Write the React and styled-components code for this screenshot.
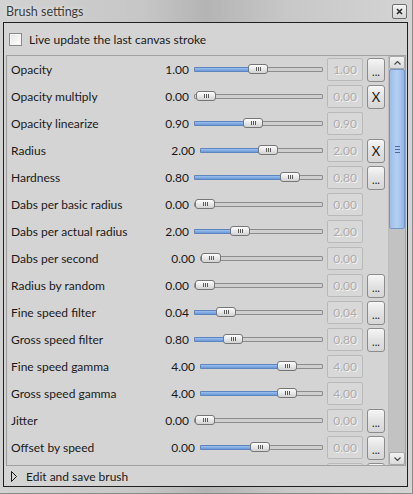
import React from 'react';
import styled, { createGlobalStyle } from 'styled-components';

const GlobalStyle = createGlobalStyle`
  html, body {
    margin: 0;
    padding: 0;
    background: #cfcfcf;
  }
  body {
    font-family: Lato, "Noto Sans", "DejaVu Sans", sans-serif;
    font-size: 12px;
    color: #1a1a1a;
  }
`;

const Frame = styled.div`
  width: 413px;
  height: 494px;
  box-sizing: border-box;
  display: flex;
  flex-direction: column;
  background: linear-gradient(90deg, #d2d2d2 0%, #c6c6c6 35%, #b4b4b4 50%, #c8c8c8 70%, #d4d4d4 100%);
  border-right: 1px solid #8a8a8a;
  border-bottom: 1px solid #8a8a8a;
  padding: 0 4px 6px 3px;
`;

const TitleBar = styled.div`
  height: 22px;
  display: flex;
  align-items: center;
  justify-content: space-between;
  padding: 0 1px 0 3px;
`;

const Title = styled.span`
  font-size: 12.5px;
  color: #3c3c3c;
  text-shadow: 0 0 4px rgba(255, 255, 255, 0.8);
`;

const CloseButton = styled.div`
  width: 13px;
  height: 13px;
  border: 1px solid #6e6e6e;
  border-radius: 2px;
  background: linear-gradient(#f4f4f4, #d6d6d6);
  display: flex;
  align-items: center;
  justify-content: center;
  margin-top: 1px;
`;

const Body = styled.div`
  flex: 1;
  display: flex;
  flex-direction: column;
  border: 1px solid #202020;
  background: #d4d4d4;
  padding: 0 1px 0 2px;
  min-height: 0;
`;

const CheckRow = styled.label`
  height: 32px;
  display: flex;
  align-items: center;
  gap: 7px;
  padding-left: 3px;
`;

const CheckBox = styled.span`
  width: 11px;
  height: 11px;
  border: 1px solid #8a8a8a;
  background: linear-gradient(135deg, #e6e6e6, #ffffff);
  box-shadow: inset 0 0 0 1px #f4f4f4;
`;

const ScrollPanel = styled.div`
  height: 409px;
  flex: none;
  display: flex;
  border: 1px solid #a2a2a2;
  border-left-color: #9a9a9a;
  overflow: hidden;
`;

const List = styled.div`
  flex: 1;
  overflow: hidden;
  display: flex;
  flex-direction: column;
`;

const Row = styled.div`
  height: 27px;
  flex: none;
  display: flex;
  align-items: center;
  padding-left: 4px;
`;

const Label = styled.span`
  width: 140px;
  white-space: nowrap;
`;

const Value = styled.span`
  width: ${p => 38 + p.$shift}px;
  text-align: right;
`;

const Slider = styled.div`
  position: relative;
  margin-left: 5px;
  width: ${p => 129 - p.$shift}px;
  height: 12px;
  display: flex;
  align-items: center;
  visibility: ${p => (p.$hidden ? 'hidden' : 'visible')};
`;

const Groove = styled.div`
  position: relative;
  width: 100%;
  height: 3px;
  border: 1px solid #8c8c8c;
  border-radius: 1px;
  background: #cfcfcf;
`;

const Fill = styled.div`
  position: absolute;
  left: -1px;
  top: -1px;
  bottom: -1px;
  background: linear-gradient(#9cc0ee, #6a98d6);
  border: 1px solid #5d86c0;
  border-radius: 1px;
  box-sizing: border-box;
`;

const Thumb = styled.div`
  position: absolute;
  top: 0;
  width: 20px;
  height: 10px;
  box-sizing: border-box;
  border: 1px solid #767676;
  border-radius: 3px;
  background: linear-gradient(#fdfdfd, #e4e4e4 60%, #d2d2d2);
  display: flex;
  align-items: center;
  justify-content: center;
  gap: 1px;
`;

const Grip = styled.span`
  width: 1px;
  height: 4px;
  background: #5a5a5a;
`;

const Spin = styled.div`
  margin-left: 4px;
  width: 36px;
  height: 23px;
  box-sizing: border-box;
  border: 1px solid #b9b9b9;
  border-radius: 2px;
  background: #d8d8d8;
  color: #ababab;
  text-shadow: 1px 1px 0 #f4f4f4;
  display: flex;
  align-items: center;
  justify-content: center;
`;

const Action = styled.div`
  margin-left: 4px;
  width: 18px;
  height: 24px;
  box-sizing: border-box;
  border: 1px solid #8c8c8c;
  border-radius: 3px;
  background: linear-gradient(#f6f6f6, #e2e2e2 50%, #d6d6d6);
  display: flex;
  align-items: center;
  justify-content: center;
  font-size: ${p => (p.$kind === 'X' ? '13px' : '11px')};
  color: #202020;
  padding-top: ${p => (p.$kind === 'X' ? '0' : '3px')};
  visibility: ${p => (p.$kind ? 'visible' : 'hidden')};
`;

const ScrollBar = styled.div`
  width: 16px;
  display: flex;
  flex-direction: column;
  background: #c2c2c2;
  border-left: 1px solid #bcbcbc;
`;

const ArrowButton = styled.div`
  height: 13px;
  box-sizing: border-box;
  border: 1px solid #a8a8a8;
  border-radius: 2px;
  background: linear-gradient(#f2f2f2, #dadada);
  display: flex;
  align-items: center;
  justify-content: center;
`;

const ScrollThumb = styled.div`
  height: 160px;
  box-sizing: border-box;
  border: 1px solid #7396c8;
  border-radius: 2px;
  background: linear-gradient(90deg, #9cbdeb, #b4d0f4 50%, #94b6e6);
  display: flex;
  flex-direction: column;
  align-items: center;
  justify-content: center;
  gap: 2px;
`;

const ThumbLine = styled.span`
  width: 5px;
  height: 1px;
  background: #4a6a98;
`;

const Track = styled.div`
  flex: 1;
`;

const Expander = styled.div`
  flex: 1;
  display: flex;
  align-items: center;
  gap: 9px;
  padding-left: 5px;
`;

const rows = [
  { label: 'Opacity', value: '1.00', thumb: 54, action: '...' },
  { label: 'Opacity multiply', value: '0.00', thumb: 2, action: 'X' },
  { label: 'Opacity linearize', value: '0.90', thumb: 49 },
  { label: 'Radius', value: '2.00', shift: 6, thumb: 58, action: 'X' },
  { label: 'Hardness', value: '0.80', thumb: 86, action: '...' },
  { label: 'Dabs per basic radius', value: '0.00', thumb: 1 },
  { label: 'Dabs per actual radius', value: '2.00', thumb: 36 },
  { label: 'Dabs per second', value: '0.00', shift: 6, thumb: 1 },
  { label: 'Radius by random', value: '0.00', thumb: 1, action: '...' },
  { label: 'Fine speed filter', value: '0.04', thumb: 22, action: '...' },
  { label: 'Gross speed filter', value: '0.80', thumb: 29, action: '...' },
  { label: 'Fine speed gamma', value: '4.00', shift: 6, thumb: 77 },
  { label: 'Gross speed gamma', value: '4.00', shift: 6, thumb: 77 },
  { label: 'Jitter', value: '0.00', thumb: 1, action: '...' },
  { label: 'Offset by speed', value: '0.00', shift: 6, thumb: 50, action: '...' },
];

function SettingRow({ label, value, shift = 0, thumb, action, stub }) {
  return (
    <Row>
      <Label>{label}</Label>
      <Value $shift={shift}>{value}</Value>
      <Slider $shift={shift} $hidden={stub}>
        <Groove>{thumb > 2 && <Fill style={{ width: thumb + 3 }} />}</Groove>
        <Thumb style={{ left: thumb }}>
          <Grip />
          <Grip />
          <Grip />
        </Thumb>
      </Slider>
      <Spin>{value}</Spin>
      <Action $kind={action}>{action}</Action>
    </Row>
  );
}

function Chevron({ down }) {
  return (
    <svg width="7" height="4" viewBox="0 0 7 4">
      <path d={down ? 'M0.5 0.5 L3.5 3.5 L6.5 0.5' : 'M0.5 3.5 L3.5 0.5 L6.5 3.5'} fill="none" stroke="#4a4a4a" strokeWidth="1.2" />
    </svg>
  );
}

export default function App() {
  return (
    <>
      <GlobalStyle />
      <Frame>
        <TitleBar>
          <Title>Brush settings</Title>
          <CloseButton>
            <svg width="7" height="7" viewBox="0 0 7 7">
              <path d="M1 1 L6 6 M6 1 L1 6" stroke="#2a2a2a" strokeWidth="1.6" />
            </svg>
          </CloseButton>
        </TitleBar>
        <Body>
          <CheckRow>
            <CheckBox />
            Live update the last canvas stroke
          </CheckRow>
          <ScrollPanel>
            <List>
              {rows.map(r => (
                <SettingRow key={r.label} {...r} />
              ))}
              <SettingRow stub thumb={1} action=" " />
            </List>
            <ScrollBar>
              <ArrowButton>
                <Chevron />
              </ArrowButton>
              <ScrollThumb>
                <ThumbLine />
                <ThumbLine />
                <ThumbLine />
              </ScrollThumb>
              <Track />
              <ArrowButton>
                <Chevron down />
              </ArrowButton>
            </ScrollBar>
          </ScrollPanel>
          <Expander>
            <svg width="6" height="11" viewBox="0 0 6 11">
              <path d="M0.5 0.5 L5.5 5.5 L0.5 10.5 Z" fill="none" stroke="#1a1a1a" strokeWidth="1" />
            </svg>
            Edit and save brush
          </Expander>
        </Body>
      </Frame>
    </>
  );
}
